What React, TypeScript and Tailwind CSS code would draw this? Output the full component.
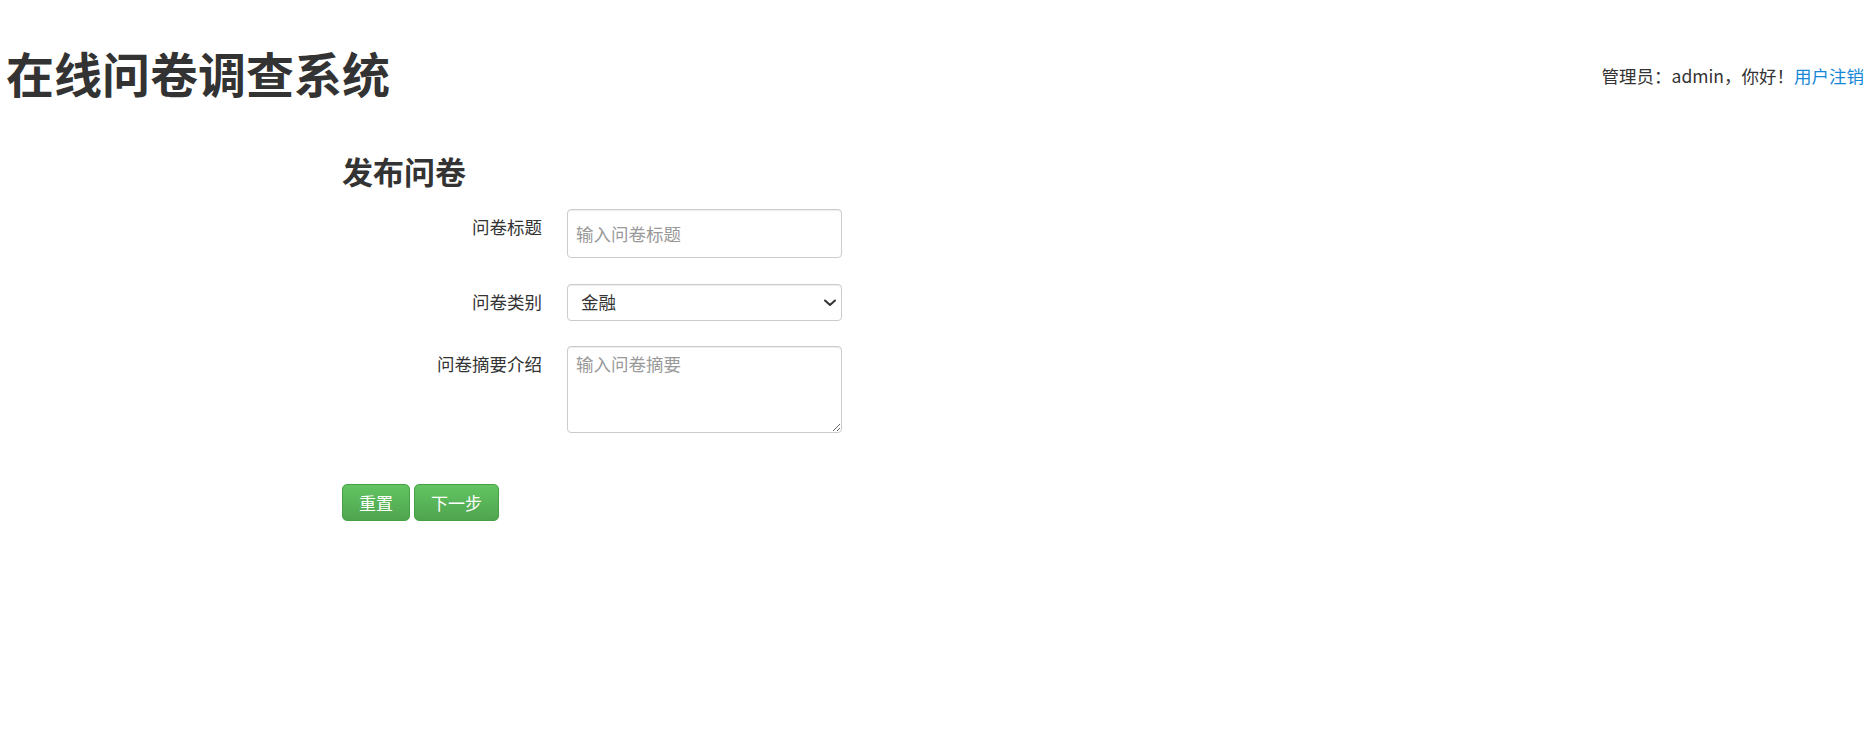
const App = () => (
  <div className="min-h-screen bg-white text-[#333] text-[17.5px] font-['Noto_Sans_CJK_SC','Noto_Sans',sans-serif]">
    <header className="flex items-start justify-between pl-[6px] pr-[12px] pt-[46px]">
      <h1 className="text-[48px] font-bold leading-[1.1]">在线问卷调查系统</h1>
      <div className="mt-[17px] leading-[25px]">
        管理员：admin，你好！<a href="#" className="text-[#1588d8] hover:underline">用户注销</a>
      </div>
    </header>

    <main className="ml-[342px] mt-[55px]">
      <h3 className="text-[31px] font-bold leading-[1.1]">发布问卷</h3>

      <form className="mt-[21px] flex flex-col">
        <div className="grid grid-cols-[200px_275px] gap-x-[25px]">
          <label className="pt-[5px] text-right leading-[25px]">问卷标题</label>
          <input
            type="text"
            placeholder="输入问卷标题"
            className="h-[49px] rounded-[4px] border border-[#ccc] px-[8px] shadow-[inset_0_1px_1px_rgba(0,0,0,0.075)] outline-none placeholder:text-[#999]"
          />
        </div>

        <div className="mt-[26px] grid grid-cols-[200px_275px] gap-x-[25px]">
          <label className="pt-[5px] text-right leading-[25px]">问卷类别</label>
          <div className="relative">
            <select className="h-[37px] w-full appearance-none rounded-[4px] border border-[#ccc] bg-white pl-[13px] pr-[24px] shadow-[inset_0_1px_1px_rgba(0,0,0,0.075)] outline-none">
              <option>金融</option>
              <option>教育</option>
              <option>医疗</option>
              <option>其他</option>
            </select>
            <svg className="pointer-events-none absolute right-[5px] top-[15px]" width="14" height="8" viewBox="0 0 14 8" fill="none">
              <polyline points="2,1.5 7,6 12,1.5" stroke="#333" strokeWidth="2" strokeLinecap="round" strokeLinejoin="round" />
            </svg>
          </div>
        </div>

        <div className="mt-[25px] grid grid-cols-[200px_275px] gap-x-[25px]">
          <label className="pt-[5px] text-right leading-[25px]">问卷摘要介绍</label>
          <textarea
            placeholder="输入问卷摘要"
            className="h-[87px] rounded-[4px] border border-[#ccc] px-[8px] pt-[4px] leading-[25px] shadow-[inset_0_1px_1px_rgba(0,0,0,0.075)] outline-none placeholder:text-[#999]"
          />
        </div>

        <div className="mt-[51px] flex gap-[4px]">
          <button
            type="reset"
            className="h-[37px] rounded-[5px] border border-[#46a046] bg-linear-to-b from-[#62c462] to-[#4fa54f] px-[16px] text-[17px] text-white"
          >
            重置
          </button>
          <button
            type="button"
            className="h-[37px] rounded-[5px] border border-[#46a046] bg-linear-to-b from-[#62c462] to-[#4fa54f] px-[16px] text-[17px] text-white"
          >
            下一步
          </button>
        </div>
      </form>
    </main>
  </div>
);

export default App;
